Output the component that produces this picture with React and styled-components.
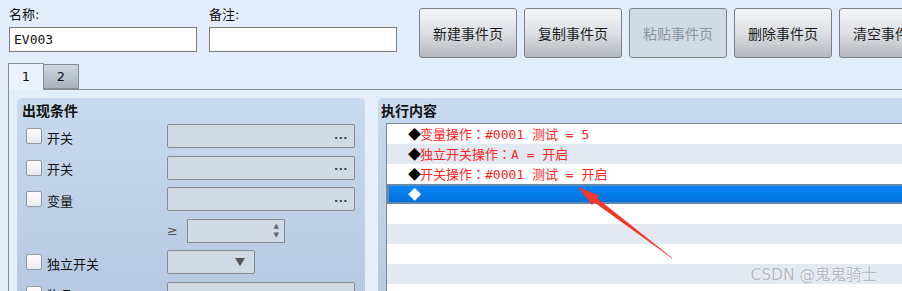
import React from 'react'
import styled, { createGlobalStyle } from 'styled-components'

const GlobalStyle = createGlobalStyle`
	html, body {
		margin: 0;
		padding: 0;
		background: #e1edfa;
	}
	* {
		box-sizing: border-box;
	}
`;

const uiFont = `"DejaVu Sans", "Noto Sans CJK SC", sans-serif`;
const monoFont = `"DejaVu Sans Mono", "Noto Sans CJK SC", monospace`;

const Page = styled.div`
	position: relative;
	width: 902px;
	height: 291px;
	overflow: hidden;
	background: #e1edfa;
	font-family: ${uiFont};
	font-size: 13px;
	color: #111;
`;

const TopBar = styled.div`
	display: flex;
	align-items: flex-start;
	padding-left: 9px;
	height: 63px;
`;

const Field = styled.div`
	display: flex;
	flex-direction: column;
	flex: 0 0 188px;
	margin-right: 12px;
	padding-top: 6px;
`;

const FieldLabel = styled.div`
	line-height: 18px;
	height: 18px;
	margin-bottom: 3px;
`;

const TextInput = styled.div`
	height: 25px;
	border: 1px solid #7c7c7c;
	background: #fff;
	font-family: ${monoFont};
	font-size: 13px;
	line-height: 23px;
	padding-left: 4px;
`;

const ButtonRow = styled.div`
	display: flex;
	flex-shrink: 0;
	gap: 7px;
	margin-left: 10px;
	padding-top: 8px;
`;

const ToolButton = styled.div`
	flex: 0 0 98px;
	height: 50px;
	border: 1px solid #7d8186;
	border-radius: 3px;
	display: flex;
	align-items: center;
	justify-content: center;
	font-size: 14px;
	white-space: nowrap;
	color: ${p => (p.$disabled ? '#8c949d' : '#1c1c1c')};
	background: ${p => (p.$disabled
		? '#cfdbe7'
		: 'linear-gradient(#f4f5f7, #dde0e4 50%, #c4c8cd 80%, #b4b9bf)')};
`;

const TabRow = styled.div`
	display: flex;
	align-items: flex-end;
	padding-left: 8px;
	height: 26px;
`;

const Tab = styled.div`
	position: relative;
	z-index: 1;
	width: ${p => (p.$active ? '36px' : '35px')};
	height: ${p => (p.$active ? '27px' : '25px')};
	margin-bottom: ${p => (p.$active ? '-1px' : '0')};
	border: 1px solid #8a8d92;
	border-bottom: ${p => (p.$active ? 'none' : '1px solid #8a8d92')};
	border-left: ${p => (p.$active ? '1px solid #8a8d92' : 'none')};
	background: ${p => (p.$active ? '#eaf3fd' : 'linear-gradient(#ced6df, #a9b2bc)')};
	display: flex;
	align-items: center;
	justify-content: center;
	font-size: 13px;
	padding-bottom: ${p => (p.$active ? '2px' : '0')};
`;

const Content = styled.div`
	display: flex;
	margin-left: 8px;
	border-top: 1px solid #8a8d92;
	border-left: 1px solid #8a8d92;
	background: #e4effb;
	padding: 7px 0 0 7px;
	gap: 11px;
	height: 210px;
`;

const Panel = styled.div`
	flex: 0 0 ${p => p.$width};
	border: 1px solid #e8f0f9;
	border-radius: 6px;
	background: linear-gradient(#c7daef, #b3c6de);
	padding: 3px 0 0 ${p => p.$padLeft};
	height: 240px;
`;

const PanelTitle = styled.div`
	font-weight: bold;
	font-size: 14px;
	line-height: 20px;
	height: 20px;
`;

const CondGrid = styled.div`
	display: grid;
	grid-template-columns: 141px 188px;
	grid-auto-rows: 24px;
	row-gap: 7.6px;
	margin-top: 3px;
	padding-left: 4px;
`;

const CheckCell = styled.label`
	display: flex;
	align-items: center;
	gap: 5px;
	padding-top: 2px;
`;

const CheckBox = styled.span`
	width: 16px;
	height: 16px;
	margin-top: -2px;
	border: 1px solid #8e97a2;
	border-radius: 2px;
	background: linear-gradient(#ffffff, #e7ebef);
`;

const PickBox = styled.div`
	width: ${p => p.$width || '188px'};
	height: 24px;
	border: 1px solid #878b91;
	border-radius: ${p => (p.$square ? '0' : '2px')};
	background: #d0dbe6;
	display: flex;
	align-items: center;
	justify-content: flex-end;
	padding-right: 6px;
	color: #3a3a3a;
`;

const Dots = styled.span`
	font-size: 11px;
	font-weight: bold;
	letter-spacing: 0.5px;
	line-height: 1;
	padding-bottom: 2px;
`;

const CompareCell = styled.div`
	display: flex;
	align-items: center;
	gap: 9px;
	color: #555;
`;

const SpinArrows = styled.div`
	display: flex;
	flex-direction: column;
	align-items: center;
	font-size: 7px;
	line-height: 9px;
	color: #666;
	margin-right: -1px;
`;

const DropArrow = styled.span`
	width: 0;
	height: 0;
	border-left: 5px solid transparent;
	border-right: 5px solid transparent;
	border-top: 8px solid #555;
	margin-right: 3px;
`;

const ListBox = styled.div`
	margin-top: 2px;
	margin-left: 5px;
	border-top: 1px solid #7f868e;
	border-left: 1px solid #7f868e;
	background: #fff;
	font-family: ${monoFont};
	font-size: 13px;
`;

const ListRow = styled.div`
	height: 20px;
	padding-left: ${p => (p.$selected ? '19px' : '21px')};
	white-space: nowrap;
	color: #ff2424;
	background: ${p => (p.$selected
		? 'linear-gradient(#0a86f7, #0070dd)'
		: p.$odd ? '#e2e9f1' : '#ffffff')};
	border: ${p => (p.$selected ? '2px solid #6489ad' : 'none')};
	border-right: none;
	line-height: ${p => (p.$selected ? '16px' : '20px')};
`;

const Diamond = styled.span`
	font-family: "Noto Sans CJK SC", sans-serif;
	color: ${p => (p.$light ? '#ffffff' : '#000000')};
	margin-right: -1px;
`;

const Colon = styled.span`
	font-family: "Noto Sans CJK TC", sans-serif;
`;

const Arrow = styled.svg`
	position: absolute;
	left: 570px;
	top: 180px;
	pointer-events: none;
`;

const Watermark = styled.div`
	position: absolute;
	right: 25px;
	top: 262px;
	font-family: "DejaVu Sans", "Noto Sans CJK SC", sans-serif;
	font-size: 15.5px;
	color: #b3b8bf;
	text-shadow: 0 0 2px #fff, 0 0 1px #fff;
	pointer-events: none;
`;

const conditions = [
	{ label: '开关', kind: 'pick' },
	{ label: '开关', kind: 'pick' },
	{ label: '变量', kind: 'pick' },
	{ label: null, kind: 'compare' },
	{ label: '独立开关', kind: 'drop' },
	{ label: '物品', kind: 'pick' },
];

const commands = [
	{ head: '变量操作', tail: '#0001 测试 = 5' },
	{ head: '独立开关操作', tail: 'A = 开启' },
	{ head: '开关操作', tail: '#0001 测试 = 开启' },
	{ selected: true },
	{}, {}, {}, {}, {},
];

const buttons = ['新建事件页', '复制事件页', '粘贴事件页', '删除事件页', '清空事件页'];

const renderControl = (kind) => {
	if (kind === 'pick') return <PickBox><Dots>...</Dots></PickBox>
	if (kind === 'drop') return <PickBox $width="88px"><DropArrow /></PickBox>
	return (
		<CompareCell>
			<span>≥</span>
			<PickBox $width="98px" $square>
				<SpinArrows><span>▲</span><span>▼</span></SpinArrows>
			</PickBox>
		</CompareCell>
	)
}

const App = () => {
	return (
		<>
			<GlobalStyle />
			<Page>
				<TopBar>
					<Field>
						<FieldLabel>名称:</FieldLabel>
						<TextInput>EV003</TextInput>
					</Field>
					<Field>
						<FieldLabel>备注:</FieldLabel>
						<TextInput />
					</Field>
					<ButtonRow>
						{buttons.map((b, i) => (
							<ToolButton key={b} $disabled={i === 2}>{b}</ToolButton>
						))}
					</ButtonRow>
				</TopBar>

				<TabRow>
					<Tab $active>1</Tab>
					<Tab>2</Tab>
				</TabRow>

				<Content>
					<Panel $width="350px" $padLeft="5px">
						<PanelTitle>出现条件</PanelTitle>
						<CondGrid>
							{conditions.map((c, i) => (
								<React.Fragment key={i}>
									{c.label ? (
										<CheckCell><CheckBox />{c.label}</CheckCell>
									) : <span />}
									{renderControl(c.kind)}
								</React.Fragment>
							))}
						</CondGrid>
					</Panel>

					<Panel $width="600px" $padLeft="3px">
						<PanelTitle>执行内容</PanelTitle>
						<ListBox>
							{commands.map((c, i) => (
								<ListRow key={i} $odd={i % 2 === 1} $selected={c.selected}>
									{i < 4 && <Diamond $light={c.selected}>◆</Diamond>}
									{c.head && <>{c.head}<Colon>：</Colon>{c.tail}</>}
								</ListRow>
							))}
						</ListBox>
					</Panel>
				</Content>

				<Arrow width="110" height="85" viewBox="0 0 110 85">
					<polygon
						points="8,7 29.2,15.5 27.1,18.3 102.2,77.8 101.8,78.2 24.1,22.3 22,25.1"
						fill="#f2382a"
					/>
				</Arrow>
				<Watermark>CSDN @鬼鬼骑士</Watermark>
			</Page>
		</>
	)
};

export default App
